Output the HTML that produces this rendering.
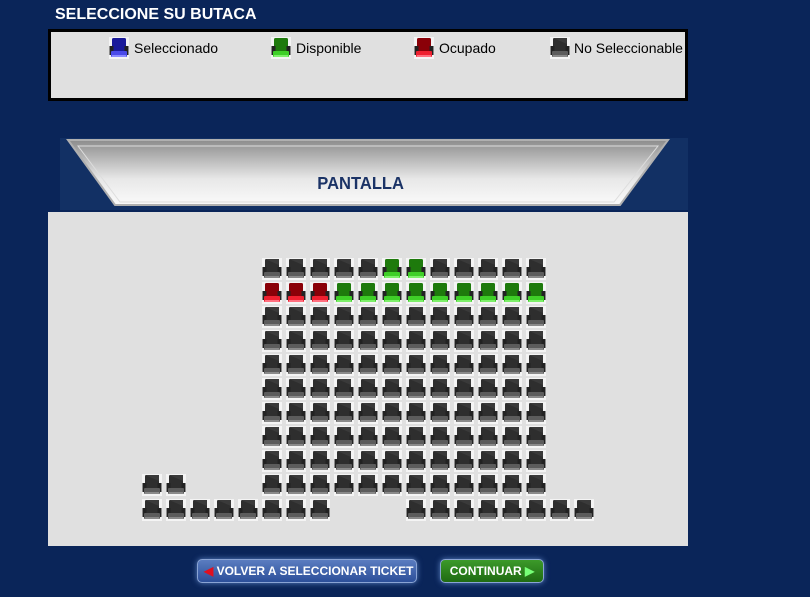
<!DOCTYPE html><html><head><style>
body{margin:0;width:810px;height:597px;background:#0a2559;position:relative;overflow:hidden;font-family:"Liberation Sans",sans-serif}
.t{position:absolute;left:55px;top:6px;color:#fff;font-weight:bold;font-size:16px}
.leg{position:absolute;left:48px;top:29px;width:634px;height:66px;border:3px solid #000;background:#e0e0e0}
.leg span{position:absolute;top:8px;font-size:14px;color:#000}
.area{position:absolute;left:48px;top:212px;width:640px;height:334px;background:#e0e0e0}
.btn{position:absolute;top:559px;height:22px;border-radius:5px;color:#fff;font-weight:bold;font-size:12px;line-height:22px;box-shadow:0 0 6px #5a7fc0;border:1px solid #8aa4d4}
</style></head><body>
<div class="t">SELECCIONE SU BUTACA</div>
<svg width="0" height="0" style="position:absolute">
<defs>
<g id="s"><rect x="-10" y="-11" width="20" height="22" fill="#f4f4f4"/><rect x="-7" y="-10" width="14" height="14" rx="1.5" fill="#2e2e2e"/><path d="M-7 -10 L7 -10 L7 -4 Z" fill="#3a3a3a"/><rect x="-9.5" y="-2" width="4" height="9" fill="#222"/><rect x="5.5" y="-2" width="4" height="9" fill="#222"/><rect x="-8" y="3" width="16" height="6" rx="1" fill="#5c5c5c"/><rect x="-7" y="7" width="14" height="2" fill="#8a8a8a"/></g>
<g id="g"><rect x="-10" y="-11" width="20" height="22" fill="#f4f4f4"/><rect x="-7" y="-10" width="14" height="14" rx="1.5" fill="#1e7a0c"/><rect x="-9.5" y="-2" width="4" height="9" fill="#222"/><rect x="5.5" y="-2" width="4" height="9" fill="#222"/><rect x="-8" y="3" width="16" height="6" rx="1" fill="#3fcf28"/><rect x="-7" y="7" width="14" height="2" fill="#7ef06a"/></g>
<g id="r"><rect x="-10" y="-11" width="20" height="22" fill="#f4f4f4"/><rect x="-7" y="-10" width="14" height="14" rx="1.5" fill="#8a0008"/><rect x="-9.5" y="-2" width="4" height="9" fill="#222"/><rect x="5.5" y="-2" width="4" height="9" fill="#222"/><rect x="-8" y="3" width="16" height="6" rx="1" fill="#ee2030"/><rect x="-7" y="7" width="14" height="2" fill="#ff7080"/></g>
<g id="b"><rect x="-10" y="-11" width="20" height="22" fill="#f4f4f4"/><rect x="-7" y="-10" width="14" height="14" rx="1.5" fill="#1a1a9a"/><rect x="-9.5" y="-2" width="4" height="9" fill="#222"/><rect x="5.5" y="-2" width="4" height="9" fill="#222"/><rect x="-8" y="3" width="16" height="6" rx="1" fill="#4a4ae8"/><rect x="-7" y="7" width="14" height="2" fill="#8a8aff"/></g>
</defs></svg>
<div class="leg">
<svg style="position:absolute;left:0;top:0" width="634" height="66"><use href="#b" x="68" y="16"/><use href="#g" x="230" y="16"/><use href="#r" x="373" y="16"/><use href="#s" x="509" y="16"/></svg>
<span style="left:83px">Seleccionado</span><span style="left:245px">Disponible</span><span style="left:388px">Ocupado</span><span style="left:523px">No Seleccionable</span>
</div>
<svg style="position:absolute;left:0;top:130px" width="810" height="82">
<rect x="60" y="8" width="628" height="72" fill="#123064"/>
<defs><linearGradient id="pg" x1="0" y1="0" x2="0" y2="1"><stop offset="0" stop-color="#8c8c8c"/><stop offset="0.6" stop-color="#e8e8e8"/><stop offset="1" stop-color="#fafafa"/></linearGradient></defs>
<polygon points="68,10 668,10 620,75 115,75" fill="url(#pg)" stroke="#b0b0b0" stroke-width="2"/>
<polygon points="78,16 658,16 614,72 120,72" fill="none" stroke="#ddd" stroke-width="1"/>
<text x="361" y="59" text-anchor="middle" font-family="Liberation Sans" font-size="18" font-weight="bold" fill="#1b3366" transform="scale(0.92,1) translate(31,0)">PANTALLA</text>
</svg>
<div class="area"></div>
<svg id="grid" style="position:absolute;left:0;top:0" width="810" height="597"></svg>
<script>
var g=document.getElementById('grid'),h='';
function u(id,x,y){h+='<use href="#'+id+'" x="'+x+'" y="'+y+'"/>';}
for(var r=0;r<10;r++){var y=269+r*24;for(var c=0;c<12;c++){var x=272+c*24,id='s';
if(r==0&&(c==5||c==6))id='g';if(r==1)id=c<3?'r':'g';u(id,x,y);}}
u('s',152,485);u('s',176,485);
for(var c=0;c<8;c++){u('s',152+c*24,510);u('s',416+c*24,510);}
g.innerHTML=h;
</script>
<div class="btn" style="left:197px;width:218px;background:linear-gradient(#5a7cc0,#2c4f99)"><span style="color:#e01020;margin-left:6px">◀</span> VOLVER A SELECCIONAR TICKET</div>
<div class="btn" style="left:440px;width:102px;background:linear-gradient(#3c9a2a,#1f6a12);text-align:center">CONTINUAR <span style="color:#7f7">▶</span></div>
</body></html>
